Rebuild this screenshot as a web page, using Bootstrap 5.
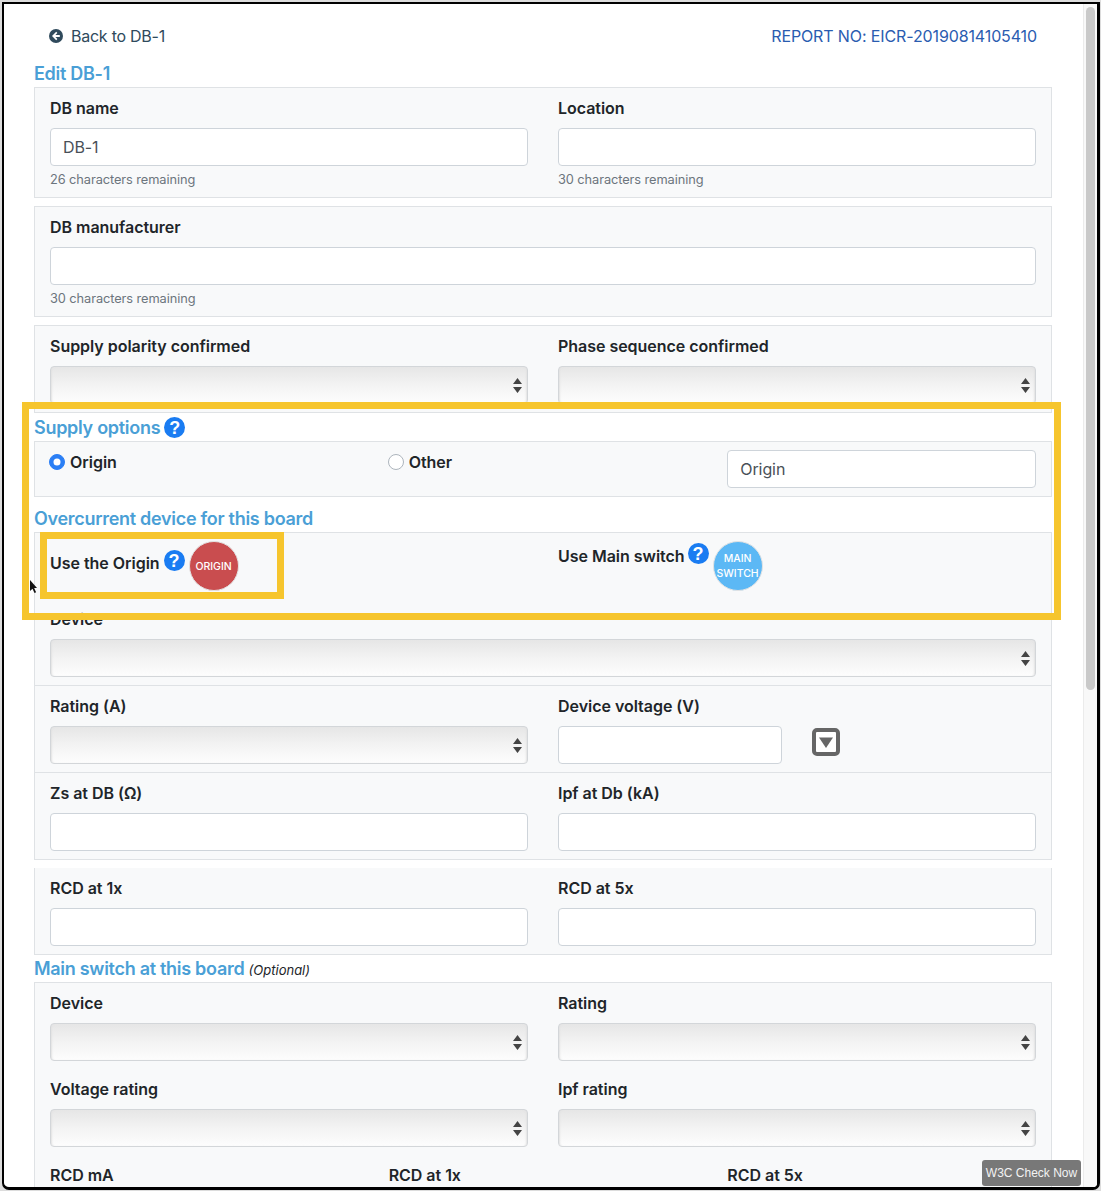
<!DOCTYPE html>
<html lang="en">
<head>
<meta charset="utf-8">
<title>Edit DB-1</title>
<link href="https://cdn.jsdelivr.net/npm/bootstrap@5.3.0/dist/css/bootstrap.min.css" rel="stylesheet">
<style>
html,body{margin:0;padding:0;background:#e6e6e6;overflow:hidden}
body{font-family:Inter,"Noto Sans","Liberation Sans",sans-serif;color:#212529}
.shot-outer{width:1101px;height:1191px;padding:2px 1px 1px 2px;background:#dcdcdc;overflow:hidden}
.shot-window{position:relative;height:100%;border:2px solid #000;border-bottom-width:3px;border-right-width:3px;border-radius:0 0 7px 7px;background:#fff;overflow:hidden;display:flex}
.page-col{flex:0 0 1079px;width:1079px;padding:20px 31px 0 30px;height:100%;overflow:hidden}
.fake-scroll{flex:0 0 14px;background:#f8f8f8;border-left:1px solid #ebebeb;padding:3px 2px 0 2px}
.fake-thumb{height:683px;background:#c9c9c9;border-radius:5px}
.top-line{height:24px;margin-bottom:12px;padding:0 15px;font-size:16px;line-height:24px}
.back-link{color:#2f4a5c;text-decoration:none;letter-spacing:-.25px}
.report-no{color:#2a5cb0;letter-spacing:-.12px}
.sec-title{font-size:18px;line-height:27px;font-weight:600;color:#4a9fd6;margin:0;letter-spacing:-.29px;white-space:nowrap}
.sec-title em{font-size:13px;font-weight:400;color:#212529;letter-spacing:0;line-height:1}
.sec-first{margin-top:1px}
.sheet{background:#f8f9fa;border:1px solid #dfe2e5;padding:8px 15px;margin-bottom:8px}
.sheet-joined{margin-bottom:0;border-bottom:1px solid #dfe2e5}
.sheet-joined + .sheet-joined{border-top:0}
.sheet-flat{border-top:0;margin-bottom:0}
.row.grid-row{--bs-gutter-x:30px}
.fld-label{display:block;font-size:16px;line-height:24px;font-weight:600;margin-bottom:8px;letter-spacing:-.03px;white-space:nowrap}
.form-control.fld-input{height:38px;border-color:#ced4da;color:#495057;font-size:16px;padding:6px 12px;border-radius:4px;box-shadow:none;background:#fff;letter-spacing:-.1px}
.form-select.fld-sel{height:38px;border:1px solid #d3d6d9;border-radius:4px;padding:0;background-color:#f4f4f4;
background-image:url("data:image/svg+xml,%3Csvg xmlns='http://www.w3.org/2000/svg' width='9' height='15'%3E%3Cpath d='M4.5 0L9 6H0z M0 9h9L4.5 15z' fill='%23444'/%3E%3C/svg%3E"),linear-gradient(#e6e6e6,#f3f3f3 50%,#fdfdfd);
background-repeat:no-repeat;background-position:right 5px center,0 0;background-size:9px 15px,100% 100%;box-shadow:inset 2px 0 2px -1px #e2e2e2,inset -2px 0 2px -1px #e2e2e2}
.hint-text{display:block;margin-top:4px;font-size:12.8px;line-height:19.2px;color:#6c757d;letter-spacing:-.08px}
.mb-field{margin-bottom:16px}
.help-dot{display:inline-flex;align-items:center;justify-content:center;width:21px;height:21px;border-radius:50%;background:#1a7cf2;color:#fff;font-size:18px;font-weight:800;line-height:1;flex:none;font-family:"Liberation Sans",sans-serif;letter-spacing:0}
.title-help{position:relative;top:-2px;vertical-align:middle;margin-left:1px}
.radio-line{display:flex;align-items:center;height:24px;font-weight:600;letter-spacing:-.03px;margin:0}
.radio-line .form-check-input{width:16px;height:16px;margin:0 5px 0 -1px;flex:none;border-color:#adb5bd}
.radio-line .form-check-input:checked{background-color:#2b7ff5;border-color:#2b7ff5}
.pick-wrap{display:flex;align-items:flex-start;height:50px;margin-bottom:16px}
.pick-text{font-size:16px;line-height:24px;font-weight:600;letter-spacing:-.03px;white-space:nowrap;margin-right:4px}
.pick-low .pick-text{margin-top:10px}
.pick-low .help-dot{margin-top:9px}
.pick-high .pick-text{margin-top:3px;margin-right:3px}
.pick-high .help-dot{margin-top:2px}
.round-pick{width:50px;height:50px;border-radius:50%;margin-left:4px;flex:none;display:flex;align-items:center;justify-content:center;text-align:center;color:#fff;font-size:10.5px;font-weight:500;line-height:15px;border:1px solid #e3e3e3}
.round-red{background:#c94d4f}
.round-blue{background:#5cb8f5}
.pick-high .round-pick{margin-left:4px}
.volt-box{width:224px;flex:none}
.drop-toggle{display:block;width:28px;height:28px;margin:2px 0 0 30px;flex:none}
.mark-outer,.mark-inner{position:absolute;border:7px solid #f6c52d;pointer-events:none}
.mark-outer{left:18px;top:398px;width:1039px;height:218px}
.mark-inner{left:36px;top:528px;width:244px;height:67px}
.w3c-tag{position:absolute;left:978px;top:1156px;width:99px;height:26px;background:#787878;color:#f3f3f3;font:12px/26px "Liberation Sans",sans-serif;text-align:center;border-radius:3px}
.mouse-arrow{position:absolute;left:25px;top:576px;width:9px;height:14px}
</style>
</head>
<body>
<div class="shot-outer">
<div class="shot-window">
  <div class="page-col">
    <div class="top-line d-flex justify-content-between align-items-center">
      <a class="back-link d-flex align-items-center" href="#">
        <svg width="14" height="14" viewBox="0 0 14 14" class="me-2"><circle cx="7" cy="7" r="7" fill="#2f4a5c"/><path d="M7.2 2.8L3 7l4.2 4.2 1.2-1.2-2-2h4.4V6H6.4l2-2z" fill="#fff"/></svg>
        Back to DB-1</a>
      <span class="report-no">REPORT NO: EICR-20190814105410</span>
    </div>

    <h5 class="sec-title">Edit DB-1</h5>
    <div class="sheet">
      <div class="row grid-row">
        <div class="col-6"><label class="fld-label">DB name</label><input class="form-control fld-input" value="DB-1"><span class="hint-text">26 characters remaining</span></div>
        <div class="col-6"><label class="fld-label">Location</label><input class="form-control fld-input"><span class="hint-text">30 characters remaining</span></div>
      </div>
    </div>
    <div class="sheet">
      <label class="fld-label">DB manufacturer</label><input class="form-control fld-input"><span class="hint-text">30 characters remaining</span>
    </div>
    <div class="sheet mb-0">
      <div class="row grid-row">
        <div class="col-6"><label class="fld-label">Supply polarity confirmed</label><select class="form-select fld-sel"></select></div>
        <div class="col-6"><label class="fld-label">Phase sequence confirmed</label><select class="form-select fld-sel"></select></div>
      </div>
    </div>

    <h5 class="sec-title sec-first">Supply options<span class="help-dot title-help ms-1">?</span></h5>
    <div class="sheet mt-0">
      <div class="row grid-row">
        <div class="col-4"><label class="radio-line"><input class="form-check-input" type="radio" name="sup" checked>Origin</label></div>
        <div class="col-4"><label class="radio-line"><input class="form-check-input" type="radio" name="sup">Other</label></div>
        <div class="col-4"><input class="form-control fld-input" value="Origin"></div>
      </div>
    </div>

    <h5 class="sec-title">Overcurrent device for this board</h5>
    <div class="sheet sheet-joined">
      <div class="row grid-row">
        <div class="col-6"><div class="pick-wrap pick-low"><span class="pick-text">Use the Origin</span><span class="help-dot">?</span><span class="round-pick round-red">ORIGIN</span></div></div>
        <div class="col-6"><div class="pick-wrap pick-high"><span class="pick-text">Use Main switch</span><span class="help-dot">?</span><span class="round-pick round-blue">MAIN SWITCH</span></div></div>
      </div>
      <label class="fld-label">Device</label><select class="form-select fld-sel"></select>
    </div>
    <div class="sheet sheet-joined">
      <div class="row grid-row">
        <div class="col-6"><label class="fld-label">Rating (A)</label><select class="form-select fld-sel"></select></div>
        <div class="col-6"><label class="fld-label">Device voltage (V)</label>
          <div class="d-flex align-items-start"><input class="form-control fld-input volt-box">
            <svg class="drop-toggle" viewBox="0 0 28 28"><rect x="2" y="2" width="24" height="24" rx="3" fill="#fff" stroke="#666" stroke-width="4"/><path d="M7 9.5h14L14 20z" fill="#666"/></svg>
          </div></div>
      </div>
    </div>
    <div class="sheet sheet-joined mb-2">
      <div class="row grid-row">
        <div class="col-6"><label class="fld-label">Zs at DB (Ω)</label><input class="form-control fld-input"></div>
        <div class="col-6"><label class="fld-label">Ipf at Db (kA)</label><input class="form-control fld-input"></div>
      </div>
    </div>
    <div class="sheet sheet-flat">
      <div class="row grid-row">
        <div class="col-6"><label class="fld-label">RCD at 1x</label><input class="form-control fld-input"></div>
        <div class="col-6"><label class="fld-label">RCD at 5x</label><input class="form-control fld-input"></div>
      </div>
    </div>

    <h5 class="sec-title">Main switch at this board <em>(Optional)</em></h5>
    <div class="sheet">
      <div class="row grid-row mb-field">
        <div class="col-6"><label class="fld-label">Device</label><select class="form-select fld-sel"></select></div>
        <div class="col-6"><label class="fld-label">Rating</label><select class="form-select fld-sel"></select></div>
      </div>
      <div class="row grid-row mb-field">
        <div class="col-6"><label class="fld-label">Voltage rating</label><select class="form-select fld-sel"></select></div>
        <div class="col-6"><label class="fld-label">Ipf rating</label><select class="form-select fld-sel"></select></div>
      </div>
      <div class="row grid-row">
        <div class="col-4"><label class="fld-label">RCD mA</label><select class="form-select fld-sel"></select></div>
        <div class="col-4"><label class="fld-label">RCD at 1x</label><input class="form-control fld-input"></div>
        <div class="col-4"><label class="fld-label">RCD at 5x</label><input class="form-control fld-input"></div>
      </div>
    </div>
  </div>
  <div class="fake-scroll"><div class="fake-thumb"></div></div>

  <div class="mark-outer"></div>
  <div class="mark-inner"></div>
  <svg class="mouse-arrow" viewBox="0 0 9 14"><path d="M1 0v11l2.5-2.2L5.5 13l1.6-.7-2-4.2H8z" fill="#111"/></svg>
  <div class="w3c-tag">W3C Check Now</div>
</div>
</div>
<script src="https://cdn.jsdelivr.net/npm/bootstrap@5.3.0/dist/js/bootstrap.bundle.min.js"></script>
</body>
</html>
